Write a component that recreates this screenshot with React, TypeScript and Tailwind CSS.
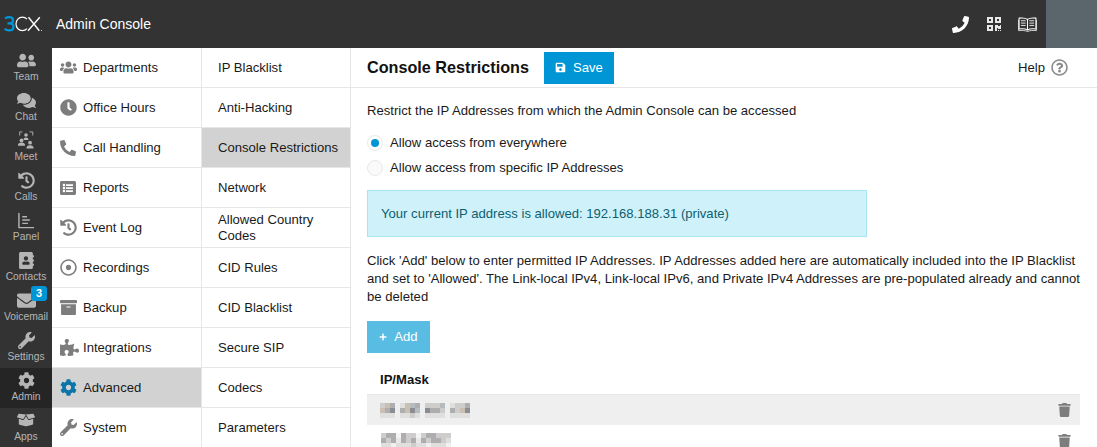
import type { ReactNode } from "react";
import {
  FaArchive,
  FaBoxOpen,
  FaClock,
  FaCog,
  FaComments,
  FaEnvelope,
  FaHistory,
  FaListAlt,
  FaPhone,
  FaPlus,
  FaPuzzlePiece,
  FaQrcode,
  FaRegDotCircle,
  FaRegQuestionCircle,
  FaSave,
  FaTrash,
  FaUserFriends,
  FaUsers,
  FaWrench,
  FaAddressBook,
} from "react-icons/fa";

function Logo() {
  return (
    <svg viewBox="0 0 42 16" className="w-[42px] h-[16px]" fill="none">
      <path d="M2 2.500C3 1.500 4.500 1.200 6 1.200c2.600 0 4 1.300 4 3.200 0 1.800-1.500 3-3.700 3 2.600 0 4.200 1.200 4.200 3.300 0 2.200-1.800 3.700-4.500 3.700-1.700 0-3.200-.5-4.300-1.600M6.300 7.400H4.500" stroke="#0096d6" strokeWidth="2.300" />
      <path d="M24 3.200C22.800 1.900 21.200 1.200 19.400 1.200c-3.600 0-6.400 2.800-6.400 6.700s2.800 6.800 6.400 6.800c1.800 0 3.400-.7 4.600-2" stroke="#fff" strokeWidth="1.200" />
      <path d="M25.500 1.200l10.800 13.500M36.800 1.200L25 14.700" stroke="#fff" strokeWidth="1.400" />
      <circle cx="38.500" cy="14.500" r=".5" fill="#fff" />
    </svg>
  );
}

function MeetIcon() {
  return (
    <svg viewBox="0 0 20 20" className="w-[18px] h-[18px]" fill="currentColor">
      <path d="M6 1H3v4M14 1h3.500v4" fill="none" stroke="currentColor" strokeWidth="1" />
      <circle cx="10" cy="4.500" r="2" />
      <path d="M7.300 10c0-2 1-2.800 2.700-2.800s2.700.8 2.700 2.800z" />
      <circle cx="5" cy="10.500" r="2.100" />
      <path d="M1 16.500c0-3 1.500-3.800 4-3.800s4 .8 4 3.800z" />
      <circle cx="14.500" cy="13" r="2.100" />
      <path d="M10.500 19.500c0-3 1.500-3.800 4-3.800s4 .8 4 3.800z" />
    </svg>
  );
}

function PanelIcon() {
  return (
    <svg viewBox="0 0 18 18" className="w-[17px] h-[17px]" fill="none" stroke="currentColor" strokeWidth="1.500">
      <path d="M1 1v15.500h16" />
      <path d="M4.500 5h5M4.500 8.500h8M4.500 12h6" />
    </svg>
  );
}

function BookIcon() {
  return (
    <svg viewBox="0 0 20 16" className="w-[19px] h-[15px]" fill="none" stroke="currentColor" strokeWidth="1.100">
      <path d="M10 2.500C8 1 4.500 .8 1 1.200v11.600c3.500-.4 7-.2 9 1.200 2-1.400 5.500-1.600 9-1.200V1.200C15.500 .8 12 1 10 2.500zM10 2.500V14" />
      <path d="M3 4h5M3 6.500h5M3 9h5M12 4h5M12 6.500h5M12 9h5" strokeWidth=".9" />
      <path d="M.5 3v11.500c3.500-.4 7-.2 9.500 1 2.500-1.200 6-1.400 9.500-1V3" strokeWidth=".8" />
    </svg>
  );
}

// blurred (mosaic) addresses in the table
function Mosaic({ cells }: { cells: string[][] }) {
  return (
    <svg width={cells[0].length * 5} height={cells.length * 5} shapeRendering="crispEdges" className="block">
      {cells.map((row, y) =>
        row.map((c, x) => <rect key={`${x}-${y}`} x={x * 5} y={y * 5} width="5" height="5" fill={c} />),
      )}
    </svg>
  );
}

const a = "#cfcdcb";
const b = "#aeaeb0";
const c = "#cbbfb2";
const d = "#dfdfdd";
const e = "#8c8c94";
const f = "#b4bcc0";
const t = "transparent";

const MOSAIC_1 = [
  [a, c, b, t, d, c, f, b, t, a, a, a, f, t, d, a, a, b],
  [c, b, e, t, b, c, e, f, t, e, b, b, a, t, b, a, c, e],
  [d, d, d, t, d, d, a, d, t, d, d, d, d, t, d, d, d, d],
];

const MOSAIC_2 = [
  [a, b, b, "#f4f4f4", b, a, a, "#f4f4f4", a, b, b, a, a, a],
  [b, a, b, "#e8e8e8", b, a, b, "#e8e8e8", b, a, b, b, a, d],
  [d, d, "#f0f0f0", d, d, d, a, d, d, "#f0f0f0", d, d, d, "#f0f0f0"],
];

const RAIL: { label: string; icon: ReactNode; active?: boolean; badge?: string }[] = [
  { label: "Team", icon: <FaUserFriends className="w-[19px] h-[19px]" /> },
  { label: "Chat", icon: <FaComments className="w-[19px] h-[19px]" /> },
  { label: "Meet", icon: <MeetIcon /> },
  { label: "Calls", icon: <FaHistory className="w-[17px] h-[17px]" /> },
  { label: "Panel", icon: <PanelIcon /> },
  { label: "Contacts", icon: <FaAddressBook className="w-[17px] h-[17px]" /> },
  { label: "Voicemail", icon: <FaEnvelope className="w-[19px] h-[19px]" />, badge: "3" },
  { label: "Settings", icon: <FaWrench className="w-[17px] h-[17px]" /> },
  { label: "Admin", icon: <FaCog className="w-[17px] h-[17px]" />, active: true },
  { label: "Apps", icon: <FaBoxOpen className="w-[18px] h-[18px]" /> },
];

const MENU: { label: string; icon: ReactNode; active?: boolean }[] = [
  { label: "Departments", icon: <FaUsers className="w-[17px] h-[17px]" /> },
  { label: "Office Hours", icon: <FaClock className="w-[17px] h-[17px]" /> },
  { label: "Call Handling", icon: <FaPhone className="w-[16px] h-[16px] -scale-x-100" /> },
  { label: "Reports", icon: <FaListAlt className="w-[16px] h-[16px]" /> },
  { label: "Event Log", icon: <FaHistory className="w-[17px] h-[17px]" /> },
  { label: "Recordings", icon: <FaRegDotCircle className="w-[17px] h-[17px]" /> },
  { label: "Backup", icon: <FaArchive className="w-[17px] h-[17px]" /> },
  { label: "Integrations", icon: <FaPuzzlePiece className="w-[19px] h-[19px]" /> },
  { label: "Advanced", icon: <FaCog className="w-[17px] h-[17px] text-[#0a75a8]" />, active: true },
  { label: "System", icon: <FaWrench className="w-[17px] h-[17px]" /> },
];

const SUBMENU = [
  "IP Blacklist",
  "Anti-Hacking",
  "Console Restrictions",
  "Network",
  "Allowed Country Codes",
  "CID Rules",
  "CID Blacklist",
  "Secure SIP",
  "Codecs",
  "Parameters",
];

export default function App() {
  return (
    <div className="h-[447px] w-[1097px] overflow-hidden bg-white flex flex-col text-[13.1px] text-[#1a1a1a] font-['Liberation_Sans',Arial,sans-serif]">
      {/* Top bar */}
      <div className="h-[48px] shrink-0 bg-[#333333] flex items-center text-white">
        <div className="w-[56px] pl-[3px] shrink-0">
          <Logo />
        </div>
        <div className="text-[14px]">Admin Console</div>
        <div className="ml-auto flex items-center">
          <FaPhone className="w-[17px] h-[17px] mr-[17px]" />
          <FaQrcode className="w-[16px] h-[16px] mr-[16px] text-[#e8e8e8]" />
          <BookIcon />
          <div className="ml-[9px] w-[51px] h-[48px] bg-[#5a666c]" />
        </div>
      </div>

      <div className="flex flex-1 min-h-0">
        {/* Icon rail */}
        <div className="w-[52px] shrink-0 bg-[#333333]">
          {RAIL.map((r) => (
            <div
              key={r.label}
              className={`relative h-[40px] flex flex-col items-center justify-end pb-[5px] text-[#b5b5b5] ${r.active ? "bg-[#252525]" : ""}`}
            >
              <div className="h-[20px] flex items-center justify-center">{r.icon}</div>
              <div className="text-[10.3px] leading-[13px]">{r.label}</div>
              {r.badge && (
                <div className="absolute top-[-2px] right-[5px] w-[16px] h-[15px] rounded-[3px] bg-[#0096d6] text-white text-[11px] font-bold leading-[15px] text-center">
                  {r.badge}
                </div>
              )}
            </div>
          ))}
        </div>

        {/* Main menu */}
        <div className="w-[150px] shrink-0 border-r border-[#e6e6e6]">
          {MENU.map((m) => (
            <div
              key={m.label}
              className={`h-[40px] flex items-center border-b border-[#e6e6e6] ${m.active ? "bg-[#d2d2d2]" : ""}`}
            >
              <div className="w-[31px] pl-[8px] shrink-0 text-[#7d7d7d] flex justify-start">{m.icon}</div>
              <span>{m.label}</span>
            </div>
          ))}
        </div>

        {/* Sub menu */}
        <div className="w-[149px] shrink-0 border-r border-[#e6e6e6]">
          {SUBMENU.map((s) => (
            <div
              key={s}
              className={`h-[40px] flex items-center pl-[16px] pr-[10px] leading-[16px] border-b border-[#e6e6e6] ${s === "Console Restrictions" ? "bg-[#d2d2d2]" : ""}`}
            >
              {s}
            </div>
          ))}
        </div>

        {/* Content */}
        <div className="flex-1 min-w-0">
          <div className="h-[40px] border-b border-[#e6e6e6] flex items-center pl-[16px] pr-[29px]">
            <h1 className="text-[16.200px] font-bold text-[#111]">Console Restrictions</h1>
            <button className="ml-[15px] h-[32px] w-[70px] bg-[#0096d6] text-white flex items-center justify-center gap-[7px]">
              <FaSave className="w-[11px] h-[11px]" />
              Save
            </button>
            <div className="ml-auto flex items-center gap-[6px]">
              <span>Help</span>
              <FaRegQuestionCircle className="w-[17px] h-[17px] text-[#8a8a8a]" />
            </div>
          </div>

          <div className="pl-[16px] pr-[17px]">
            <p className="mt-[15px] leading-[16px]">Restrict the IP Addresses from which the Admin Console can be accessed</p>

            <div className="mt-[16px] flex items-center gap-[7px] h-[16px]">
              <span className="w-[16px] h-[16px] rounded-full bg-white border border-[#e8e8e8] flex items-center justify-center">
                <span className="w-[8px] h-[8px] rounded-full bg-[#0096d6]" />
              </span>
              Allow access from everywhere
            </div>
            <div className="mt-[9px] flex items-center gap-[7px] h-[16px]">
              <span className="w-[16px] h-[16px] rounded-full bg-[#fafafa] border border-[#e8e8e8]" />
              Allow access from specific IP Addresses
            </div>

            <div className="mt-[14px] w-[500px] h-[47px] bg-[#cff1fa] border border-[#a6e5f3] flex items-center pl-[13px] pt-[1px] text-[#0c5f6f]">
              Your current IP address is allowed: 192.168.188.31 (private)
            </div>

            <p className="mt-[15px] leading-[18px]">
              Click 'Add' below to enter permitted IP Addresses. IP Addresses added here are automatically included into the IP Blacklist and set to 'Allowed'. The Link-local IPv4, Link-local IPv6, and Private IPv4 Addresses are pre-populated already and cannot be deleted
            </p>

            <button className="mt-[15px] h-[32px] w-[63px] bg-[#59bce2] text-white flex items-center justify-center gap-[7px]">
              <FaPlus className="w-[8px] h-[8px]" />
              Add
            </button>

            <div className="mt-[11px] h-[30px] flex items-center pl-[13px] pt-[2px] font-bold text-[#111]">IP/Mask</div>
            <div className="h-[31px] bg-[#efefef] border-t border-[#e6e6e6] flex items-center justify-between pl-[13px] pr-[9px]">
              <Mosaic cells={MOSAIC_1} />
              <FaTrash className="w-[13px] h-[14px] text-[#7d7d7d]" />
            </div>
            <div className="h-[31px] flex items-center justify-between pl-[14px] pr-[9px]">
              <Mosaic cells={MOSAIC_2} />
              <FaTrash className="w-[13px] h-[14px] text-[#7d7d7d]" />
            </div>
          </div>
        </div>
      </div>
    </div>
  );
}
